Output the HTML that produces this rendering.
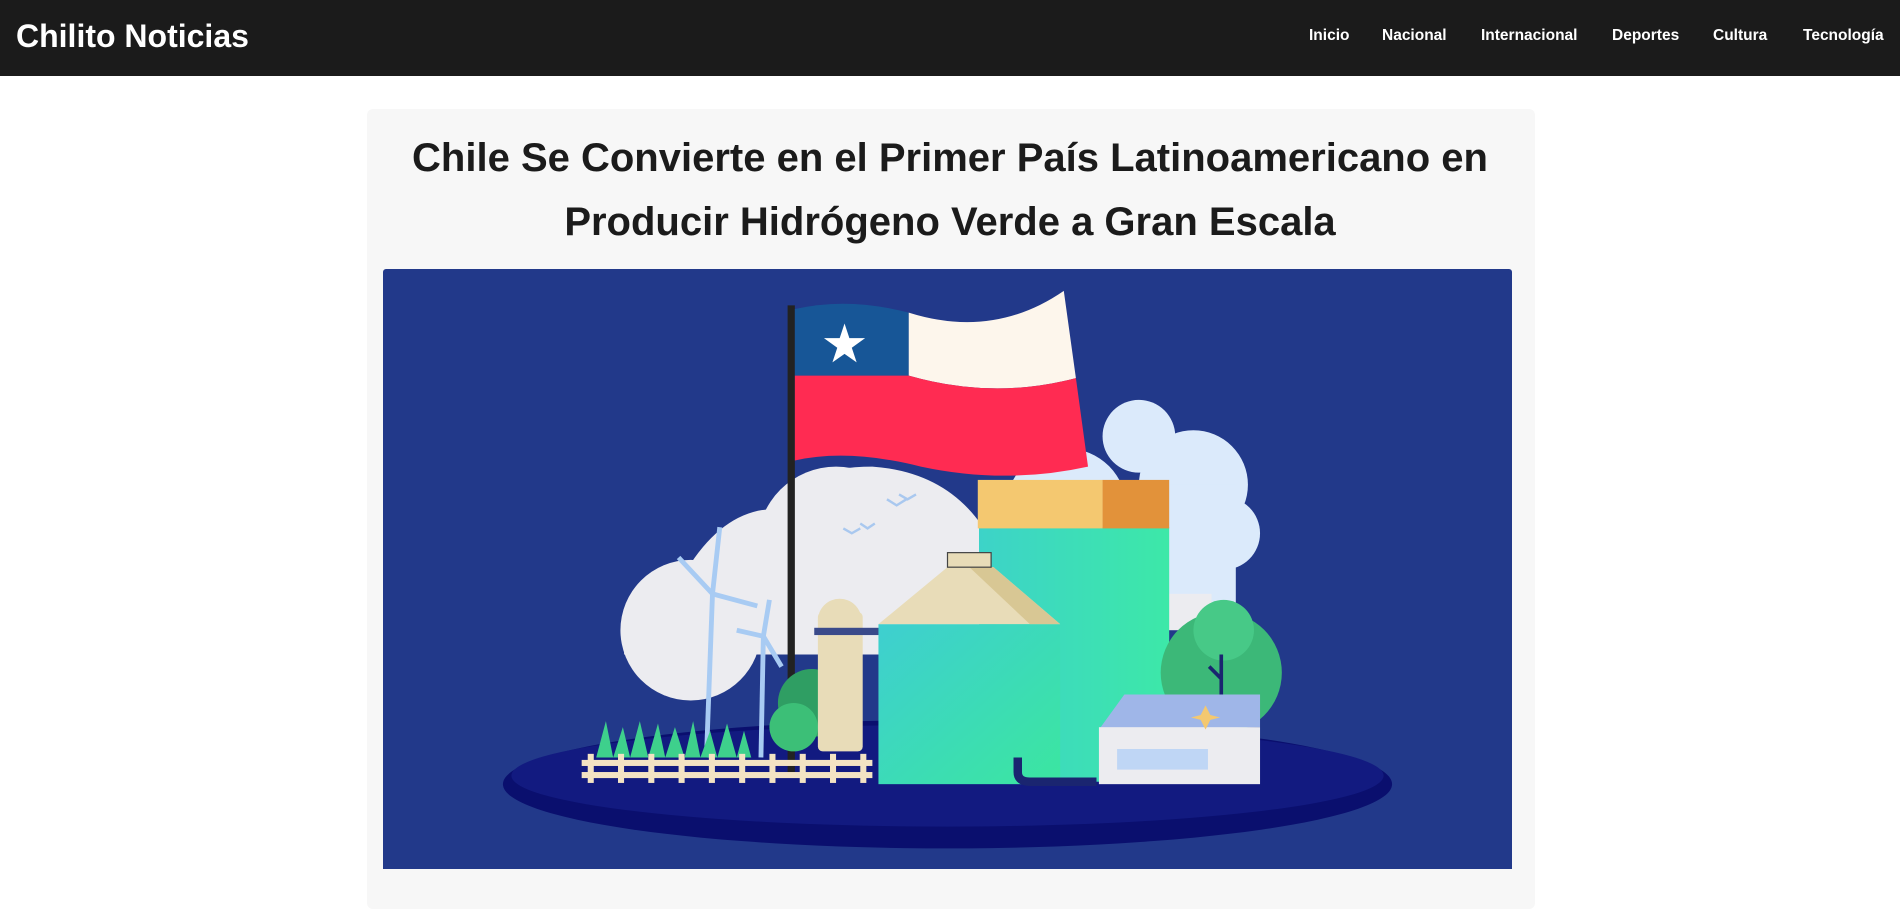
<!DOCTYPE html>
<html><head><meta charset="utf-8">
<style>
*{margin:0;padding:0;box-sizing:border-box}
html,body{width:1900px;height:867px;overflow:hidden;background:#fff;font-family:"Liberation Sans",Arial,sans-serif}
header{height:76px;background:#1b1b1b;position:relative;color:#fff}
.logo{position:absolute;left:16px;top:16px;font-size:32px;font-weight:bold;line-height:40px}
nav a{position:absolute;top:26px;font-size:15.5px;font-weight:bold;color:#fff;text-decoration:none;line-height:20px}
.card{position:absolute;left:367px;top:109px;width:1168px;height:800px;background:#f7f7f7;border-radius:6px}
h1{position:absolute;left:0;right:0;top:126px;text-align:center;font-size:40px;line-height:64px;color:#1b1b1b;font-weight:bold}
.img{position:absolute;left:383px;top:269px;width:1129px;height:600px;background:#22398a;border-radius:3px 3px 0 0;overflow:hidden}
</style></head><body>
<header><div class="logo">Chilito Noticias</div>
<nav><a style="left:1309px">Inicio</a><a style="left:1382px">Nacional</a><a style="left:1481px">Internacional</a><a style="left:1612px">Deportes</a><a style="left:1713px">Cultura</a><a style="left:1803px">Tecnología</a></nav>
</header>
<div class="card"></div>
<h1>Chile Se Convierte en el Primer País Latinoamericano en<br>Producir Hidrógeno Verde a Gran Escala</h1>
<div class="img">
<svg width="1129" height="600" viewBox="316 222 932 495" preserveAspectRatio="none">
<defs>
<linearGradient id="g1" x1="0" y1="0" x2="1" y2="0"><stop offset="0" stop-color="#3dd3c8"/><stop offset="1" stop-color="#3de8a8"/></linearGradient>
<linearGradient id="g2" x1="0" y1="0" x2="1" y2="1"><stop offset="0" stop-color="#3ecfd0"/><stop offset="1" stop-color="#3be6a0"/></linearGradient>
</defs>
<g fill="#dbeafb">
<circle cx="940" cy="360" r="30"/><circle cx="985" cy="400" r="45"/><circle cx="880" cy="420" r="50"/><circle cx="1010" cy="440" r="30"/><rect x="840" y="400" width="180" height="110"/>
</g>
<g fill="#ececf0">
<path d="M515 540 Q515 470 570 465 Q600 420 640 420 Q660 385 720 385 Q790 390 820 450 L830 540 Z"/>
<circle cx="570" cy="520" r="58"/><circle cx="690" cy="450" r="65"/>
</g>
<rect x="960" y="490" width="40" height="30" fill="#ececf0"/>
<ellipse cx="782" cy="647" rx="367" ry="53" fill="#0a0f6e"/>
<ellipse cx="782" cy="640" rx="360" ry="42" fill="#121a80"/>
<path d="M732 412 l8 5 l8 -5 M742 408 l7 4 l7 -4 M696 436 l7 4 l7 -4 M710 432 l6 4 l6 -4" stroke="#a9c8ef" stroke-width="2" fill="none"/>
<rect x="650" y="252" width="6" height="385" fill="#222"/>
<path d="M656 255 Q700 245 750 258 L750 310 L656 310 Z" fill="#175697"/>
<path d="M750 258 Q820 280 878 240 L888 312 Q820 330 750 310 Z" fill="#fdf6ec"/>
<path d="M656 310 L750 310 Q820 330 888 312 L898 385 Q830 400 760 385 Q700 370 656 380 Z" fill="#ff2b52"/>
<polygon points="697,267 701,279 714,279 703,287 707,299 697,292 687,299 691,287 680,279 693,279" fill="#fff"/>
<g stroke="#a8cbf3" stroke-width="4" fill="none">
<line x1="588" y1="490" x2="583" y2="625"/><line x1="588" y1="490" x2="560" y2="460"/><line x1="588" y1="490" x2="594" y2="435"/><line x1="588" y1="490" x2="625" y2="500"/>
<line x1="630" y1="525" x2="628" y2="625"/><line x1="630" y1="525" x2="608" y2="520"/><line x1="630" y1="525" x2="635" y2="495"/><line x1="630" y1="525" x2="645" y2="550"/>
</g>
<circle cx="670" cy="580" r="28" fill="#2f9e63"/><circle cx="655" cy="600" r="20" fill="#3cbf77"/>
<rect x="675" y="505" width="37" height="115" rx="4" fill="#e8dcb8"/><circle cx="693" cy="512" r="18" fill="#e8dcb8"/><rect x="672" y="518" width="55" height="6" fill="#3a4a8a"/>
<rect x="808" y="435" width="157" height="210" fill="url(#g1)"/>
<rect x="807" y="396" width="103" height="40" fill="#f4c870"/><rect x="910" y="396" width="55" height="40" fill="#e2923a"/>
<rect x="725" y="515" width="150" height="132" fill="url(#g2)"/>
<polygon points="725,515 782,468 820,468 875,515" fill="#e8dcb8"/>
<polygon points="800,468 820,468 875,515 850,515" fill="#d8c794"/>
<rect x="782" y="456" width="36" height="12" fill="#e8dcb8" stroke="#444" stroke-width="1"/>
<path d="M840 625 v12 q0 8 10 8 h55" stroke="#1a2570" stroke-width="7" fill="none"/>
<circle cx="1008" cy="555" r="50" fill="#3cb878"/><circle cx="1010" cy="520" r="25" fill="#47c987"/>
<path d="M1008 540 v60 M1008 560 l-10 -10" stroke="#1a2570" stroke-width="3"/>
<polygon points="907,602 928,573 1040,573 1040,600" fill="#9fb6e8"/>
<rect x="907" y="600" width="133" height="47" fill="#ececf0"/>
<rect x="922" y="618" width="75" height="17" fill="#bfd6f5"/>
<polygon points="995,582 999,590 1007,592 999,594 995,602 991,594 983,592 991,590" fill="#f4c870"/>
<g fill="#3ed08c">
<path d="M492 625 l8 -30 l6 30 l8 -25 l6 25 l8 -30 l7 30 l8 -28 l6 28 l8 -25 l8 25 l7 -30 l6 30 l8 -22 l6 22 l8 -28 l8 28 l6 -22 l6 22 Z"/>
</g>
<g fill="#f3e3c3">
<rect x="480" y="627" width="240" height="5"/><rect x="480" y="637" width="240" height="5"/>
<rect x="485" y="622" width="5" height="24"/><rect x="510" y="622" width="5" height="24"/><rect x="535" y="622" width="5" height="24"/><rect x="560" y="622" width="5" height="24"/><rect x="585" y="622" width="5" height="24"/><rect x="610" y="622" width="5" height="24"/><rect x="635" y="622" width="5" height="24"/><rect x="660" y="622" width="5" height="24"/><rect x="685" y="622" width="5" height="24"/><rect x="710" y="622" width="5" height="24"/>
</g>
</svg>
</div>
</body></html>
